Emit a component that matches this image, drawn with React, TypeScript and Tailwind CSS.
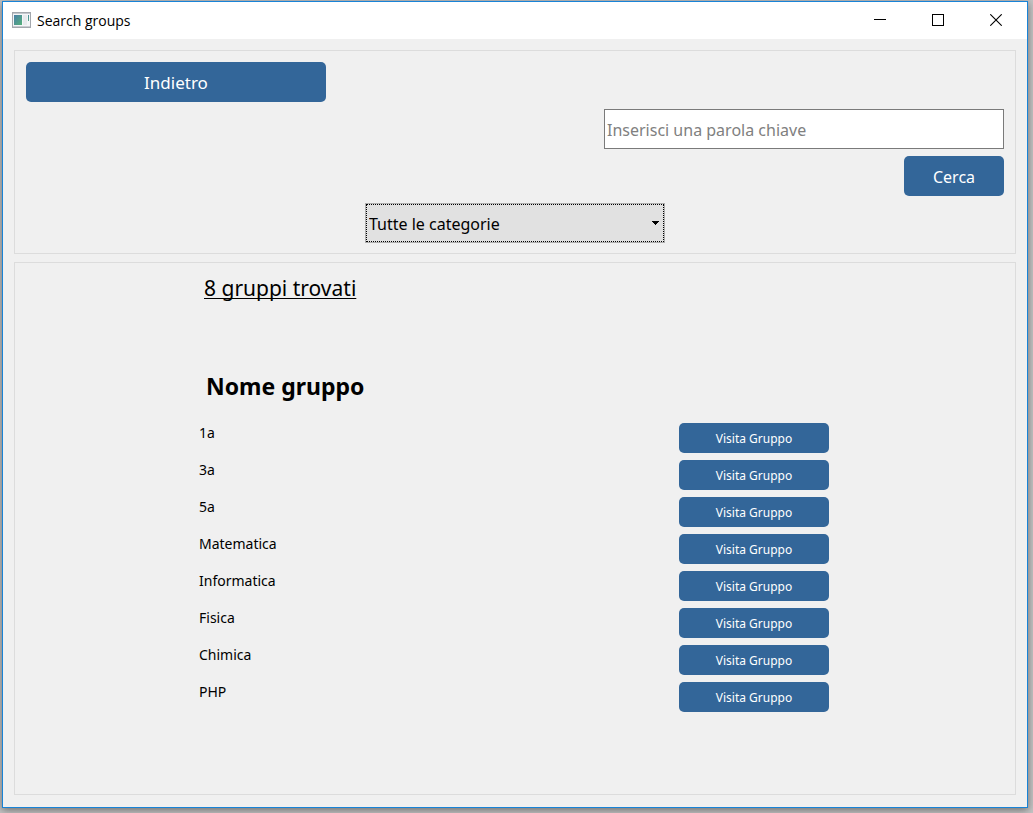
import { useState } from "react";

const groups = ["1a", "3a", "5a", "Matematica", "Informatica", "Fisica", "Chimica", "PHP"];

function AppIcon() {
  return (
    <svg width="19" height="16" viewBox="0 0 19 16" aria-hidden="true" shapeRendering="crispEdges">
      <defs>
        <linearGradient id="pane" x1="0" y1="0" x2="1" y2="1">
          <stop offset="0" stopColor="#4a7fa8" />
          <stop offset="1" stopColor="#55b07a" />
        </linearGradient>
      </defs>
      <rect x="0.5" y="0.5" width="18" height="15" fill="#f4f5f7" stroke="#a3a7ad" />
      <rect x="1" y="1" width="17" height="1" fill="#c3c7cd" />
      <rect x="2" y="3" width="8" height="10" fill="url(#pane)" />
      <rect x="11" y="3" width="4" height="10" fill="#e6e9ec" />
      <rect x="16" y="3" width="1" height="6" fill="url(#pane)" />
      <rect x="1" y="14" width="17" height="1" fill="#c9ccd1" />
    </svg>
  );
}

function TitleBar() {
  const control = "flex h-full w-[58px] items-center justify-center";
  return (
    <header className="flex h-[37px] shrink-0 items-center bg-white pr-[2px] pb-px pl-[9px]">
      <AppIcon />
      <h1 className="ml-[6px] grow pt-px font-['Open_Sans',sans-serif] text-[14px] leading-5">Search groups</h1>
      <button type="button" aria-label="Minimize" className={control}>
        <svg width="12" height="12" viewBox="0 0 12 12" shapeRendering="crispEdges">
          <path d="M0 5.5H12" stroke="#000" />
        </svg>
      </button>
      <button type="button" aria-label="Maximize" className={control}>
        <svg width="12" height="12" viewBox="0 0 12 12" shapeRendering="crispEdges">
          <rect x="0.5" y="0.5" width="11" height="11" fill="none" stroke="#000" />
        </svg>
      </button>
      <button type="button" aria-label="Close" className={control}>
        <svg width="12" height="12" viewBox="0 0 12 12">
          <path d="M0.3 0.3L11.7 11.7M11.7 0.3L0.3 11.7" stroke="#000" strokeWidth="1.1" />
        </svg>
      </button>
    </header>
  );
}

export default function App() {
  const [keyword, setKeyword] = useState("");
  return (
    <div className="flex min-h-screen flex-col bg-[#c4c4c4] pt-px pr-[5px] pb-[5px] pl-[2px] font-['Noto_Sans',sans-serif] text-black">
      <div className="flex grow flex-col border border-[#1883d7] bg-[#f0f0f0] shadow-[0_2px_8px_rgba(0,0,0,0.45)]">
        <TitleBar />
        <main className="flex grow flex-col gap-2 px-[11px] pt-[11px] pb-3">
          <form
            className="flex flex-col gap-[7px] border border-[#dcdcdc] px-[11px] pt-[11px] pb-[10px]"
            onSubmit={(e) => e.preventDefault()}
          >
            <button type="button" className="h-10 w-[300px] self-start rounded-[5px] bg-[#336699] pt-[2px] text-[17px] text-white">
              Indietro
            </button>
            <input
              type="text"
              aria-label="Parola chiave"
              placeholder="Inserisci una parola chiave"
              value={keyword}
              onChange={(e) => setKeyword(e.target.value)}
              className="h-10 w-[400px] self-end border border-[#7a7a7a] bg-white px-[2px] pt-[2px] text-[16px] outline-none placeholder:text-[#808080]"
            />
            <button type="submit" className="h-10 w-[100px] self-end rounded-[5px] bg-[#336699] pt-[2px] text-[16px] text-white">
              Cerca
            </button>
            <div className="relative h-10 w-[300px] self-center">
              <select
                aria-label="Categoria"
                className="size-full appearance-none border border-[#adadad] bg-[#e1e1e1] pt-[2px] pl-[3px] text-[16px] outline-1 -outline-offset-2 outline-black outline-dotted"
              >
                <option>Tutte le categorie</option>
              </select>
              <svg
                className="pointer-events-none absolute top-[18px] right-[6px]"
                width="7"
                height="4"
                viewBox="0 0 7 4"
                shapeRendering="crispEdges"
                aria-hidden="true"
              >
                <path d="M0 0H7V1H6V2H5V3H4V4H3V3H2V2H1V1H0Z" fill="#000" />
              </svg>
            </div>
          </form>

          <section className="grow border border-[#dcdcdc] pt-[9px] pr-[2px] pb-8">
            <div className="mx-auto w-[630px]">
              <h2 className="pl-[5px] text-[21px] leading-8 underline decoration-1 underline-offset-2 [text-decoration-skip-ink:none]">
                8 gruppi trovati
              </h2>
              <table className="mt-16 w-full border-collapse">
                <thead>
                  <tr>
                    <th scope="col" colSpan={2} className="h-[55px] p-0 pl-[7px] text-left align-top text-[23px] leading-9 font-bold">
                      Nome gruppo
                    </th>
                  </tr>
                </thead>
                <tbody>
                  {groups.map((name) => (
                    <tr key={name}>
                      <td className="h-[37px] p-0 align-top text-[14px] leading-5">{name}</td>
                      <td className="h-[37px] w-[150px] p-0 align-top">
                        <button type="button" className="block h-[30px] w-full rounded-[5px] bg-[#336699] pt-[2px] text-[12px] text-white">
                          Visita Gruppo
                        </button>
                      </td>
                    </tr>
                  ))}
                </tbody>
              </table>
            </div>
          </section>
        </main>
      </div>
    </div>
  );
}
